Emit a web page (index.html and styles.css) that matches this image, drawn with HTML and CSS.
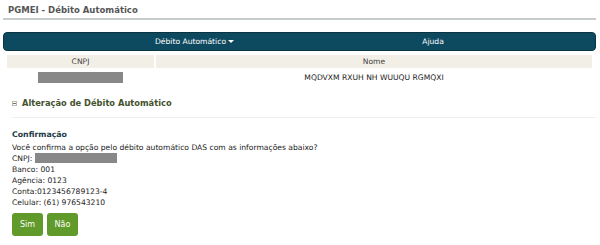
FILE: index.html
```html
<!doctype html>
<html>
<head>
    <title>PGMEI - Débito Automático</title>
    <link rel="stylesheet" href="styles.css">
</head>
<body>
<div class="page">
    <h1 class="page-title">PGMEI - Débito Automático</h1>

    <!-- Menu -->
    <div class="menu">
        <a class="menu-item menu-first" href="#">Débito Automático<span class="caret"></span></a>
        <a class="menu-item menu-second" href="#">Ajuda</a>
    </div>

    <table class="info">
        <tr>
            <th class="col-cnpj">CNPJ</th>
            <th>Nome</th>
        </tr>
        <tr>
            <td><span class="masked"></span></td>
            <td>MQDVXM RXUH NH WUUQU RGMQXI</td>
        </tr>
    </table>

    <div class="section-title">
        <svg class="toggle" width="5" height="5" viewBox="0 0 5 5">
            <rect x="0.5" y="0.5" width="4" height="4" fill="none" stroke="#b9bdb0" stroke-width="1"/>
            <line x1="1" y1="2.5" x2="4" y2="2.5" stroke="#6f7a5c" stroke-width="1"/>
        </svg>
        <span>Alteração de Débito Automático</span>
    </div>

    <div class="confirm">
        <h3>Confirmação</h3>
        <p>Você confirma a opção pelo débito automático DAS com as informações abaixo?</p>
        <p>CNPJ: <span class="masked masked-small"></span></p>
        <p>Banco: 001</p>
        <p>Agência: 0123</p>
        <p>Conta:0123456789123-4</p>
        <p>Celular: (61) 976543210</p>
        <div class="actions">
            <button type="button">Sim</button>
            <button type="button">Não</button>
        </div>
    </div>
</div>
</body>
</html>
```

FILE: styles.css
```css
body {
    margin: 0;
    padding: 0;
    font-family: "DejaVu Sans", Verdana, sans-serif;
    font-size: 7.6px;
    color: #222;
    background-color: #ffffff;
}
.page {
    padding: 3px 4px 0 3px;
}
.page-title {
    font-size: 8.5px;
    font-weight: bold;
    color: #555;
    margin: 0;
    padding: 2px 0 3px 5px;
    border-bottom: 2px solid #c6cdc9;
}
.menu {
    display: flex;
    margin-top: 12px;
    height: 17px;
    background-color: #0e4a5f;
    border: 1px solid #0a3441;
    border-radius: 4px;
    align-items: center;
    padding-left: 72px;
}
.menu-item {
    color: #ffffff;
    text-decoration: none;
    text-align: center;
}
.menu-first {
    width: 237px;
}
.menu-second {
    width: 240px;
}
.caret {
    display: inline-block;
    margin-left: 2px;
    vertical-align: middle;
    border-top: 3px solid #ffffff;
    border-left: 3px solid transparent;
    border-right: 3px solid transparent;
}
.info {
    width: 589px;
    margin: 4px 0 0 2px;
    border-collapse: separate;
    border-spacing: 2px 0;
}
.info th {
    background-color: #f2efe6;
    font-weight: normal;
    color: #444;
    height: 13px;
    padding: 0;
}
.info td {
    text-align: center;
    padding: 3px 0 0;
    height: 12px;
}
.col-cnpj {
    width: 147px;
}
.masked {
    display: inline-block;
    width: 85px;
    height: 11px;
    background-color: #888888;
    vertical-align: middle;
}
.masked-small {
    width: 82px;
    height: 10px;
    vertical-align: -2px;
}
.section-title {
    margin: 15px 0 0 9px;
    padding-bottom: 9px;
    border-bottom: 1px solid #eef0ee;
    font-size: 8.3px;
    font-weight: bold;
    color: #43522d;
    display: flex;
    align-items: center;
    gap: 5px;
}
.confirm {
    padding: 12px 0 0 9px;
}
.confirm h3 {
    font-size: 7.8px;
    font-weight: bold;
    color: #1e3b48;
    margin: 0 0 3px;
}
.confirm p {
    margin: 0;
    line-height: 11px;
}
.actions {
    display: flex;
    gap: 4px;
    margin-top: 5px;
}
.actions button {
    background-color: #5f9a2b;
    color: #ffffff;
    border: none;
    border-radius: 3px;
    font-family: "DejaVu Sans", Verdana, sans-serif;
    font-size: 8px;
    height: 23px;
    width: 31px;
    padding: 0;
}
```
